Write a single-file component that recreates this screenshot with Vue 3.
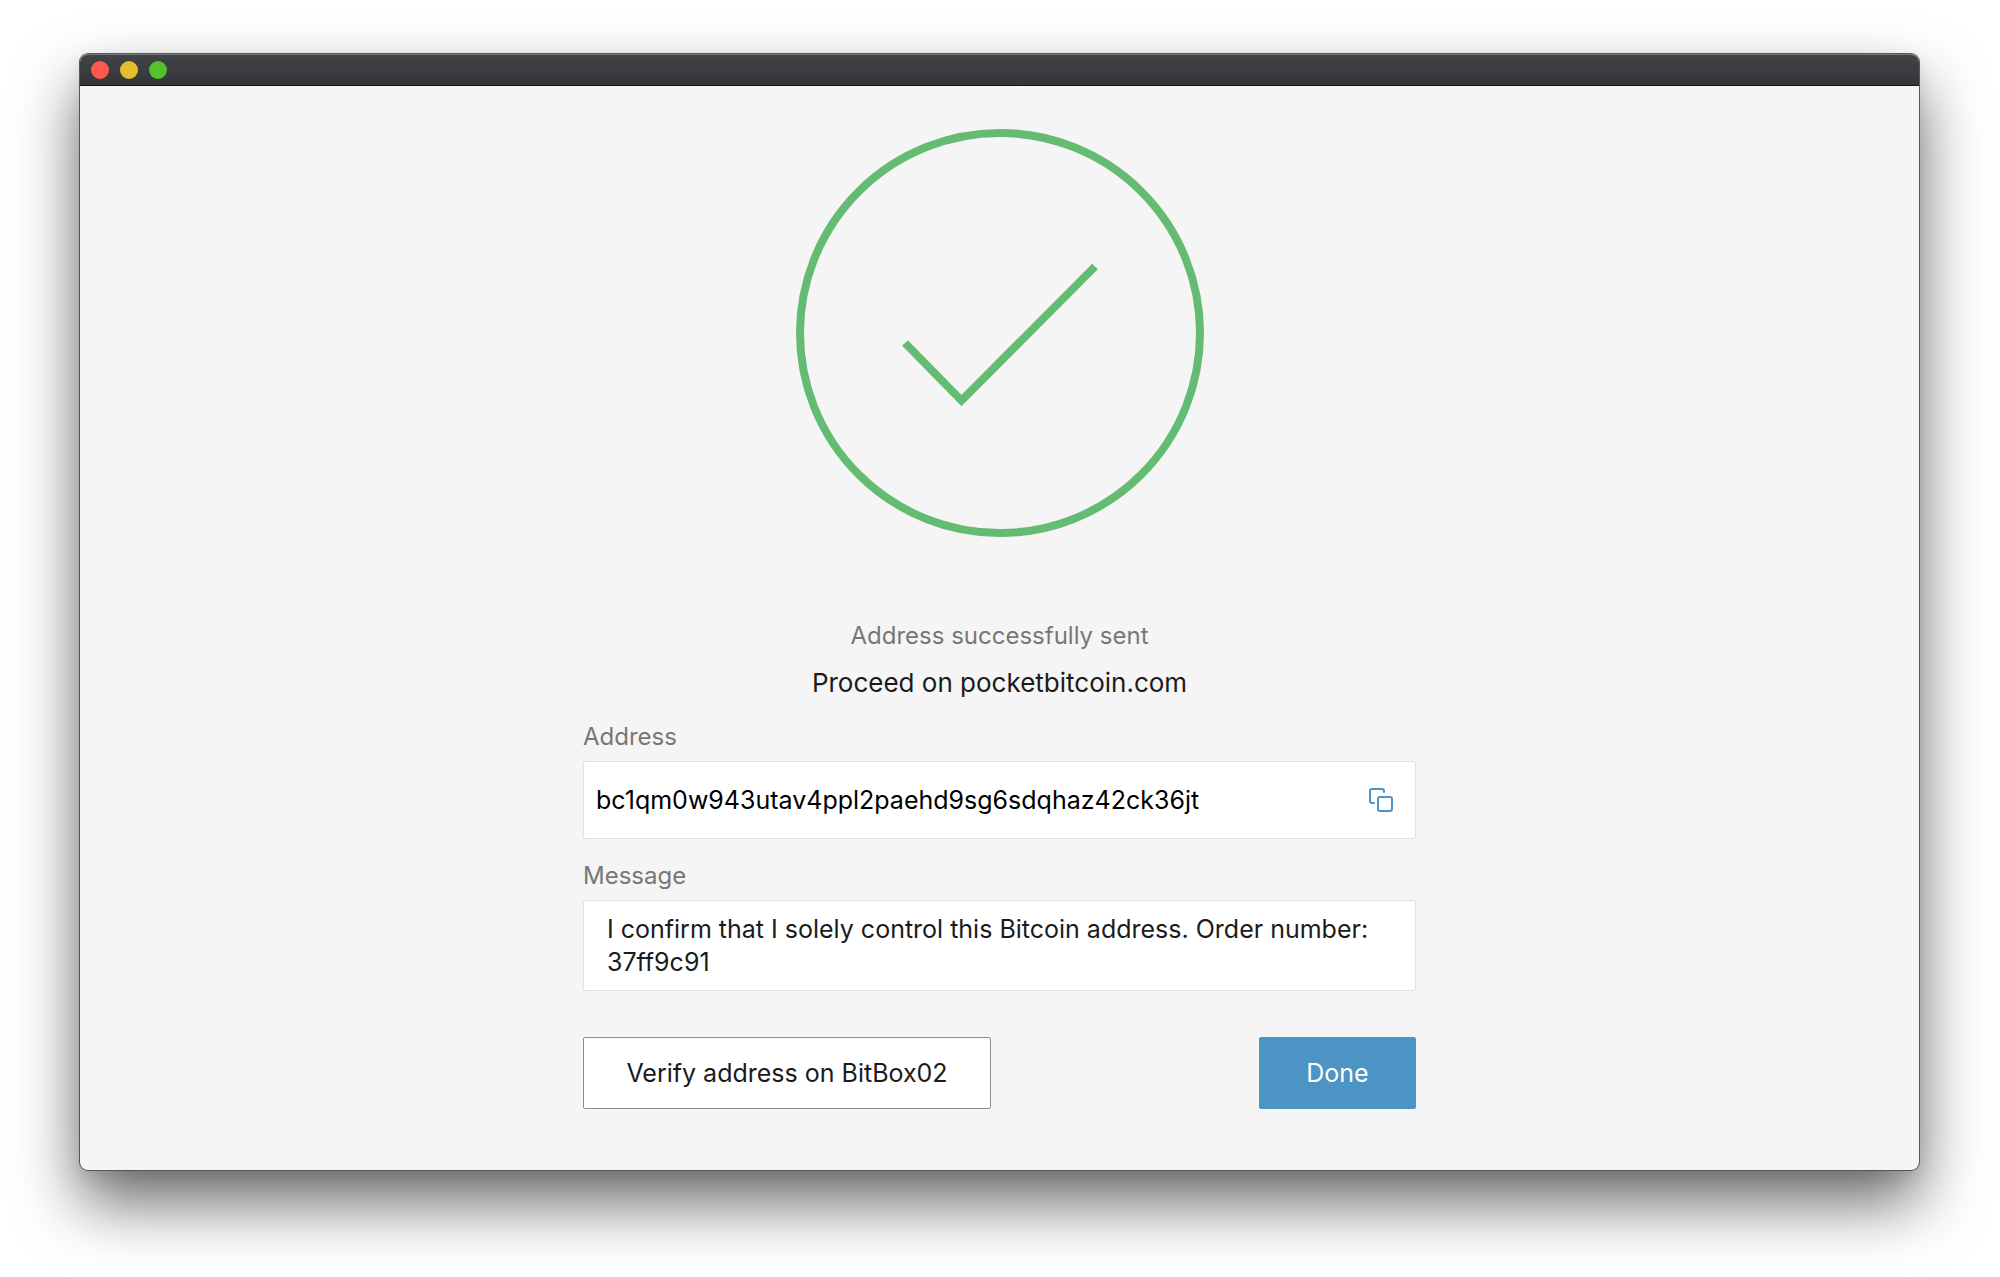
<script setup>
import { ref } from 'vue'

const address = ref('bc1qm0w943utav4ppl2paehd9sg6sdqhaz42ck36jt')
const message = ref('I confirm that I solely control this Bitcoin address. Order number: 37ff9c91')

function copyAddress() {
  navigator.clipboard?.writeText(address.value)
}
</script>

<template>
  <div class="desktop">
    <div class="window">
      <header class="titlebar">
        <button type="button" class="light close" aria-label="Close"></button>
        <button type="button" class="light minimize" aria-label="Minimize"></button>
        <button type="button" class="light zoom" aria-label="Zoom"></button>
      </header>

      <main class="content">
        <svg class="success" viewBox="0 0 408 408" fill="none" stroke="#64bc73" stroke-width="8" aria-hidden="true">
          <circle cx="204" cy="204" r="200" />
          <path d="M109 214 L165.500 271.500 L299 137.500" />
        </svg>

        <p class="status">Address successfully sent</p>
        <p class="proceed">Proceed on pocketbitcoin.com</p>

        <form class="form" @submit.prevent>
          <label for="address">Address</label>
          <div class="field address-field">
            <input id="address" type="text" readonly :value="address" />
            <button type="button" class="copy" aria-label="Copy address" @click="copyAddress">
              <svg viewBox="0 0 24 24" fill="none" stroke="currentColor" stroke-width="2" stroke-linecap="round" stroke-linejoin="round">
                <rect x="9" y="9" width="14" height="14" rx="2" />
                <path d="M5 15 H3 a2 2 0 0 1 -2 -2 V3 a2 2 0 0 1 2 -2 H13 a2 2 0 0 1 2 2 V4" />
              </svg>
            </button>
          </div>

          <label for="message">Message</label>
          <textarea id="message" class="field" rows="2" readonly :value="message"></textarea>

          <div class="actions">
            <button type="button" class="button secondary">Verify address on BitBox02</button>
            <button type="submit" class="button primary">Done</button>
          </div>
        </form>
      </main>
    </div>
  </div>
</template>

<style>
body {
  margin: 0;
  background: #fff;
}
</style>

<style scoped>
.desktop {
  box-sizing: border-box;
  min-height: 100vh;
  padding: 54px 81px 107px 80px;
  overflow: hidden;
  display: flex;
  font-family: Inter, "Liberation Sans", sans-serif;
  font-size: 25px;
  line-height: 33px;
  color: #1b1b1b;
}

.window {
  flex: 1;
  min-width: 0;
  display: flex;
  flex-direction: column;
  border-radius: 8px;
  background: #f5f5f5;
  box-shadow:
    0 0 0 1px #55565a,
    0 32px 64px rgba(0, 0, 0, 0.6),
    0 8px 16px rgba(0, 0, 0, 0.08);
}

.titlebar {
  box-sizing: border-box;
  height: 32px;
  padding: 0 11px;
  display: flex;
  align-items: center;
  gap: 11px;
  border-top: 1px solid #77787b;
  border-bottom: 1px solid #151517;
  border-radius: 8px 8px 0 0;
  background: linear-gradient(#424347, #353639);
}

.light {
  width: 18px;
  height: 18px;
  padding: 0;
  border: 0;
  border-radius: 50%;
}

.close {
  background: #fe5850;
}

.minimize {
  background: #e6bf2d;
}

.zoom {
  background: #54c22d;
}

.content {
  padding: 43px 24px 60px;
  display: flex;
  flex-direction: column;
  align-items: center;
}

.success {
  width: 408px;
  height: 408px;
  margin-bottom: 82px;
}

.status,
.proceed {
  margin: 0;
}

.status {
  margin-bottom: 14px;
  font-size: 24px;
  color: #777;
}

.proceed {
  margin-bottom: 21px;
  font-size: 26px;
}

.form {
  width: 100%;
  max-width: 833px;
  display: flex;
  flex-direction: column;
}

label {
  margin-bottom: 8px;
  font-size: 24px;
  color: #777;
}

.field {
  box-sizing: border-box;
  border: 1px solid #e2e2e2;
  border-radius: 2px;
  background: #fff;
}

.address-field {
  height: 78px;
  margin-bottom: 20px;
  padding: 0 22px 0 12px;
  display: flex;
  align-items: center;
}

input,
textarea,
.button {
  font: inherit;
  color: inherit;
}

input {
  flex: 1;
  min-width: 0;
  padding: 0;
  border: 0;
  outline: 0;
  background: transparent;
  color: #000;
}

.copy {
  padding: 0;
  border: 0;
  display: flex;
  background: none;
  color: #4c94c3;
}

.copy svg {
  width: 24px;
  height: 24px;
}

textarea {
  height: 91px;
  margin: 0 0 46px;
  padding: 12px 23px;
  outline: 0;
  resize: none;
  overflow: hidden;
}

.actions {
  display: flex;
  justify-content: space-between;
}

.button {
  height: 72px;
  padding: 0 24px;
  border: 1px solid;
  border-radius: 2px;
}

.secondary {
  min-width: 408px;
  border-color: #8c8c8c;
  background: #fff;
}

.primary {
  min-width: 157px;
  border-color: #4c94c3;
  background: #4c94c3;
  color: #fff;
}
</style>
